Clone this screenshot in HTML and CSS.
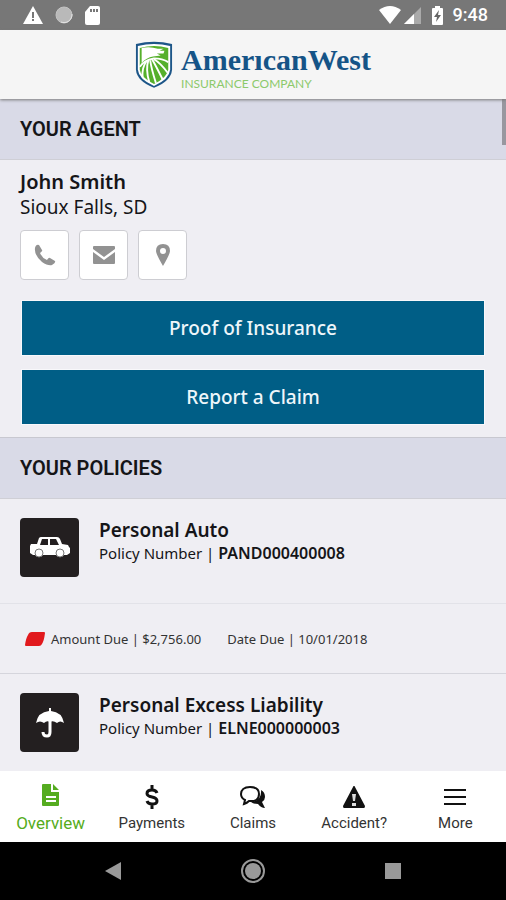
FILE: index.html
```html
<!DOCTYPE html>
<html lang="en">
<head>
<meta charset="utf-8">
<meta name="viewport" content="width=device-width, initial-scale=1">
<title>AmericanWest Insurance</title>
<link rel="stylesheet" href="styles.css">
</head>
<body>
<div class="status">
  <div class="status-group">
    <svg width="20" height="18" viewBox="0 0 20 18"><path fill="#fff" d="M10 0 20 18H0z"/><path fill="#777" d="M9 6h2v6H9zM9 13h2v2H9z"/></svg>
    <svg width="18" height="18" viewBox="0 0 18 18"><circle cx="9" cy="9" r="8" fill="#b9b9b9" stroke="#c4c4c4"/><path d="M17 8a8 8 0 0 1-11 8" fill="none" stroke="#e4e4e4"/></svg>
    <svg width="15" height="19" viewBox="0 0 15 19"><path fill="#fff" d="M5 0h8q2 0 2 2v15q0 2-2 2H2q-2 0-2-2V6z"/><path fill="#777" d="M5 3h2v3H5zM8 3h2v3H8zM11 3h2v3h-2z"/></svg>
  </div>
  <div class="status-group status-right">
    <svg width="22" height="18" viewBox="0 0 22 18"><path fill="#fff" d="M0 4Q11-4 22 4L11 18z"/></svg>
    <svg width="17" height="17" viewBox="0 0 17 17"><path fill="#aaa" d="M17 0v17H0z"/><path fill="#fff" d="M10 7v10H0z"/></svg>
    <svg class="battery" width="11" height="19" viewBox="0 0 11 19"><path fill="#fff" d="M3 0h5v2h2q1 0 1 1v15q0 1-1 1H1q-1 0-1-1V3q0-1 1-1h2z"/><path fill="#666" d="M7 4 2 11h3l-1 5 5-7H6z"/></svg>
    <span class="clock">9:48</span>
  </div>
</div>
<header class="brand">
  <svg width="38" height="50" viewBox="0 0 40 50">
    <path fill="#1d5688" d="M1 3Q20-2 39 3V30Q38 42 20 49 2 42 1 30z"/>
    <path fill="#fff" d="M3 5Q20 1 37 5V30Q36 40 20 47 4 40 3 30z"/>
    <path fill="#55b02b" d="M5 7Q20 3 35 7V30Q34 38 20 45 6 38 5 30z"/>
    <path fill="#fff" d="M7 7Q16 5 24 8L30 8 26 10 31 10 30 13 23 13 27 15 19 16Q12 17 7 23z"/>
    <g fill="none" stroke="#fff" stroke-width="2"><path d="M5 27Q9 20 20 18 29 18 35 22"/><path d="M8 38Q7 28 12 21"/><path d="M15 43Q11 30 14 20"/><path d="M22 44Q17 28 16 20"/><path d="M29 40Q22 26 18 19"/><path d="M35 34Q27 23 20 19"/></g>
  </svg>
  <div class="wordmark"><span class="name">AmerıcanWest</span><span class="sub">INSURANCE COMPANY</span></div>
</header>
<main class="content">
  <div class="thumb"></div>
  <h2 class="heading">YOUR AGENT</h2>
  <section class="agent">
    <h3 class="title">John Smith</h3>
    <p class="place">Sioux Falls, SD</p>
    <div class="contacts">
      <button class="contact" aria-label="Call"><svg width="22" height="22" viewBox="0 0 22 22"><path fill="#929292" d="M5 1 8 6Q9 7 6 9 8 14 13 16 15 13 16 14L21 17Q22 19 18 21 14 22 8 18 0 11 1 4 2 0 5 1z"/></svg></button>
      <button class="contact" aria-label="Email"><svg width="22" height="18" viewBox="0 0 22 18"><path fill="#929292" d="M1 0h20q1 0 1 1v2L11 11 0 3V1q0-1 1-1zM0 6l11 8 11-8v11q0 1-1 1H1q-1 0-1-1z"/></svg></button>
      <button class="contact" aria-label="Map"><svg width="16" height="22" viewBox="0 0 16 22"><path fill="#929292" fill-rule="evenodd" d="M8 0Q15 0 15 7 15 10 8 22 1 10 1 7 1 0 8 0zM8 4a3 3 0 1 0 0 6 3 3 0 0 0 0-6z"/></svg></button>
    </div>
    <div class="actions">
      <button class="action">Proof of Insurance</button>
      <button class="action">Report a Claim</button>
    </div>
  </section>
  <h2 class="heading">YOUR POLICIES</h2>
  <article class="policy">
    <span class="tile"><svg width="40" height="22" viewBox="0 0 40 22"><path fill="#fff" d="M1 7h6l2-6q1-1 2-1h16q2 0 3 2l2 5 6 1 1 2 1 1v5l-3 2H3l-3-2V9z"/><path fill="#231f20" d="M12 2h6v6h-8zM20 2h6l3 6h-9z"/><circle cx="9" cy="16" r="4" fill="#fff" stroke="#777"/><circle cx="30" cy="16" r="4" fill="#fff" stroke="#777"/></svg></span>
    <div><h3 class="title policy-title">Personal Auto</h3><p class="number">Policy Number | <b>PAND000400008</b></p></div>
  </article>
  <div class="due">
    <svg width="20" height="14" viewBox="0 0 20 14"><path fill="#e1191d" d="M7 0h12q1 0 1 1-1 8-3 11-1 2-3 2H1q-1 0-1-1Q1 6 3 3 4 0 7 0z"/></svg>
    <span>Amount Due | $2,756.00</span><span class="date">Date Due | 10/01/2018</span>
  </div>
  <article class="policy">
    <span class="tile"><svg width="28" height="30" viewBox="0 0 28 30"><path fill="#fff" d="M13 0h2v3Q26 4 28 15 24 12 21 15 17 12 14 14 11 12 8 15 4 12 0 15 2 4 13 3z"/><path d="M14 13v11q0 4-3 4-4 0-4-4" fill="none" stroke="#fff" stroke-width="3"/></svg></span>
    <div><h3 class="title policy-title">Personal Excess Liability</h3><p class="number">Policy Number | <b>ELNE000000003</b></p></div>
  </article>
</main>
<nav class="tabs">
  <a class="tab active" href="#overview"><svg width="24" height="24" viewBox="0 0 24 24"><path fill="#55ac20" d="M4 1h8v8h8v13q0 1-1 1H4q-1 0-1-1V2q0-1 1-1zM14 1l6 6h-6z"/><path stroke="#fff" stroke-width="2" d="M7 14h10M7 18h10"/></svg>Overview</a>
  <a class="tab" href="#payments"><svg width="24" height="24" viewBox="0 0 24 24"><path d="M17 8Q16 5 12 5 7 5 7 8.500 7 11 12 12 17 13 17 16 17 19 12 19 8 19 7 16M12 0v5M12 19v5" fill="none" stroke="#111" stroke-width="3"/></svg>Payments</a>
  <a class="tab" href="#claims"><svg width="26" height="24" viewBox="0 0 26 24"><path d="M10 2C4 2 1 5 1 9q0 4 4 6l-1 4q3-1 5-3 10 1 10-7 0-7-9-7z" fill="none" stroke="#111" stroke-width="2"/><path fill="#111" d="M21 5q4 2 4 7 0 3-3 5l3 6q-4 0-7-4-5 0-7-2 11-1 10-12z"/></svg>Claims</a>
  <a class="tab" href="#accident"><svg width="24" height="24" viewBox="0 0 24 24"><path fill="#111" d="M12 1q1 0 1 1l10 19q0 2-1 2H2q-1 0-1-2L11 2q0-1 1-1z"/><path fill="#ddd" d="M10 9h4l-1 7h-2zM10 18h4v3h-4z"/></svg>Accident?</a>
  <a class="tab" href="#more"><svg width="24" height="24" viewBox="0 0 24 24"><path stroke="#111" stroke-width="2" d="M1 5h22M1 12h22M1 19h22"/></svg>More</a>
</nav>
<div class="system">
  <button class="key" aria-label="Back"><svg width="24" height="24" viewBox="0 0 24 24"><path fill="#999" d="M4 12 20 3v18z"/></svg></button>
  <button class="key" aria-label="Home"><svg width="24" height="24" viewBox="0 0 24 24"><circle cx="12" cy="12" r="11" fill="none" stroke="#999" stroke-width="2"/><circle cx="12" cy="12" r="8" fill="#999"/></svg></button>
  <button class="key" aria-label="Recents"><svg width="24" height="24" viewBox="0 0 24 24"><path fill="#999" d="M4 4h16v16H4z"/></svg></button>
</div>
</body>
</html>
```
FILE: styles.css
```css
* { box-sizing: border-box; margin: 0; padding: 0; }
body { height: 100vh; display: flex; flex-direction: column; overflow: hidden; background: #efeef3; color: #151518; font-family: "Noto Sans", sans-serif; }
button { border: 0; font: inherit; }
svg { display: block; flex: none; }
.status { flex: none; height: 30px; padding: 0 18px 0 23px; display: flex; align-items: center; justify-content: space-between; background: #777; }
.status-group { display: flex; align-items: center; gap: 12px; }
.status-right { gap: 3px; }
.battery { margin: 0 7px 0 8px; }
.clock { color: #fff; font: 500 18px/24px Roboto, sans-serif; }
.brand { flex: none; height: 69px; display: flex; align-items: center; justify-content: center; gap: 8px; background: #f5f5f5; box-shadow: 0 1px 3px #777; z-index: 1; }
.wordmark { display: flex; flex-direction: column; padding-top: 4px; }
.name { color: #155487; font: bold 30px/34px "Liberation Serif", serif; }
.sub { color: #8cc96b; font: 12px/14px Lato, sans-serif; }
.content { flex: 1; min-height: 0; overflow: hidden; position: relative; }
.thumb { position: absolute; top: 0; right: 0; width: 4px; height: 46px; background: #98979f; }
.heading { height: 61px; padding: 0 20px; background: #d9dae7; border-bottom: 1px solid #cfcfd6; font: 600 20px/60px Roboto, sans-serif; }
.agent { padding: 9px 20px 12px; border-bottom: 1px solid #c8c8d0; }
.title { font-size: 20px; line-height: 26px; font-weight: 600; }
.policy-title { font-size: 19px; line-height: 24px; }
.place { font-size: 19px; line-height: 24px; }
.contacts { display: flex; gap: 10px; margin: 11px 0 20px; }
.contact { width: 49px; height: 50px; display: flex; align-items: center; justify-content: center; border: 1px solid #cdcdd2; border-radius: 4px; background: #fff; }
.actions { display: flex; flex-direction: column; gap: 13px; padding: 0 1px; }
.action { height: 56px; border: 1px solid #f8f8fb; background: #005e86; color: #eef6fa; font-size: 19px; font-weight: 500; }
.policy { display: flex; gap: 20px; padding: 19px 20px 26px; border-bottom: 1px solid #e2e2e8; }
.tile { flex: none; width: 59px; height: 59px; display: flex; align-items: center; justify-content: center; border-radius: 4px; background: #231f20; }
.number { font-size: 15px; line-height: 22px; }
.number b { font-size: 16px; font-weight: 600; }
.due { height: 70px; display: flex; align-items: center; gap: 6px; padding: 0 25px; border-bottom: 1px solid #d5d5dc; color: #333; font-size: 13px; }
.date { margin-left: 20px; }
.tabs { flex: none; height: 71px; display: grid; grid-template-columns: repeat(5, 1fr); background: #fff; }
.tab { display: flex; flex-direction: column; align-items: center; justify-content: center; gap: 4px; padding-top: 4px; color: #333; text-decoration: none; font: 15px/20px Roboto, sans-serif; }
.active { gap: 6px; padding-top: 2px; color: #55ac20; font-size: 17px; }
.system { flex: none; height: 58px; display: flex; align-items: center; justify-content: center; gap: 116px; background: #000; }
.key { background: none; }
```
